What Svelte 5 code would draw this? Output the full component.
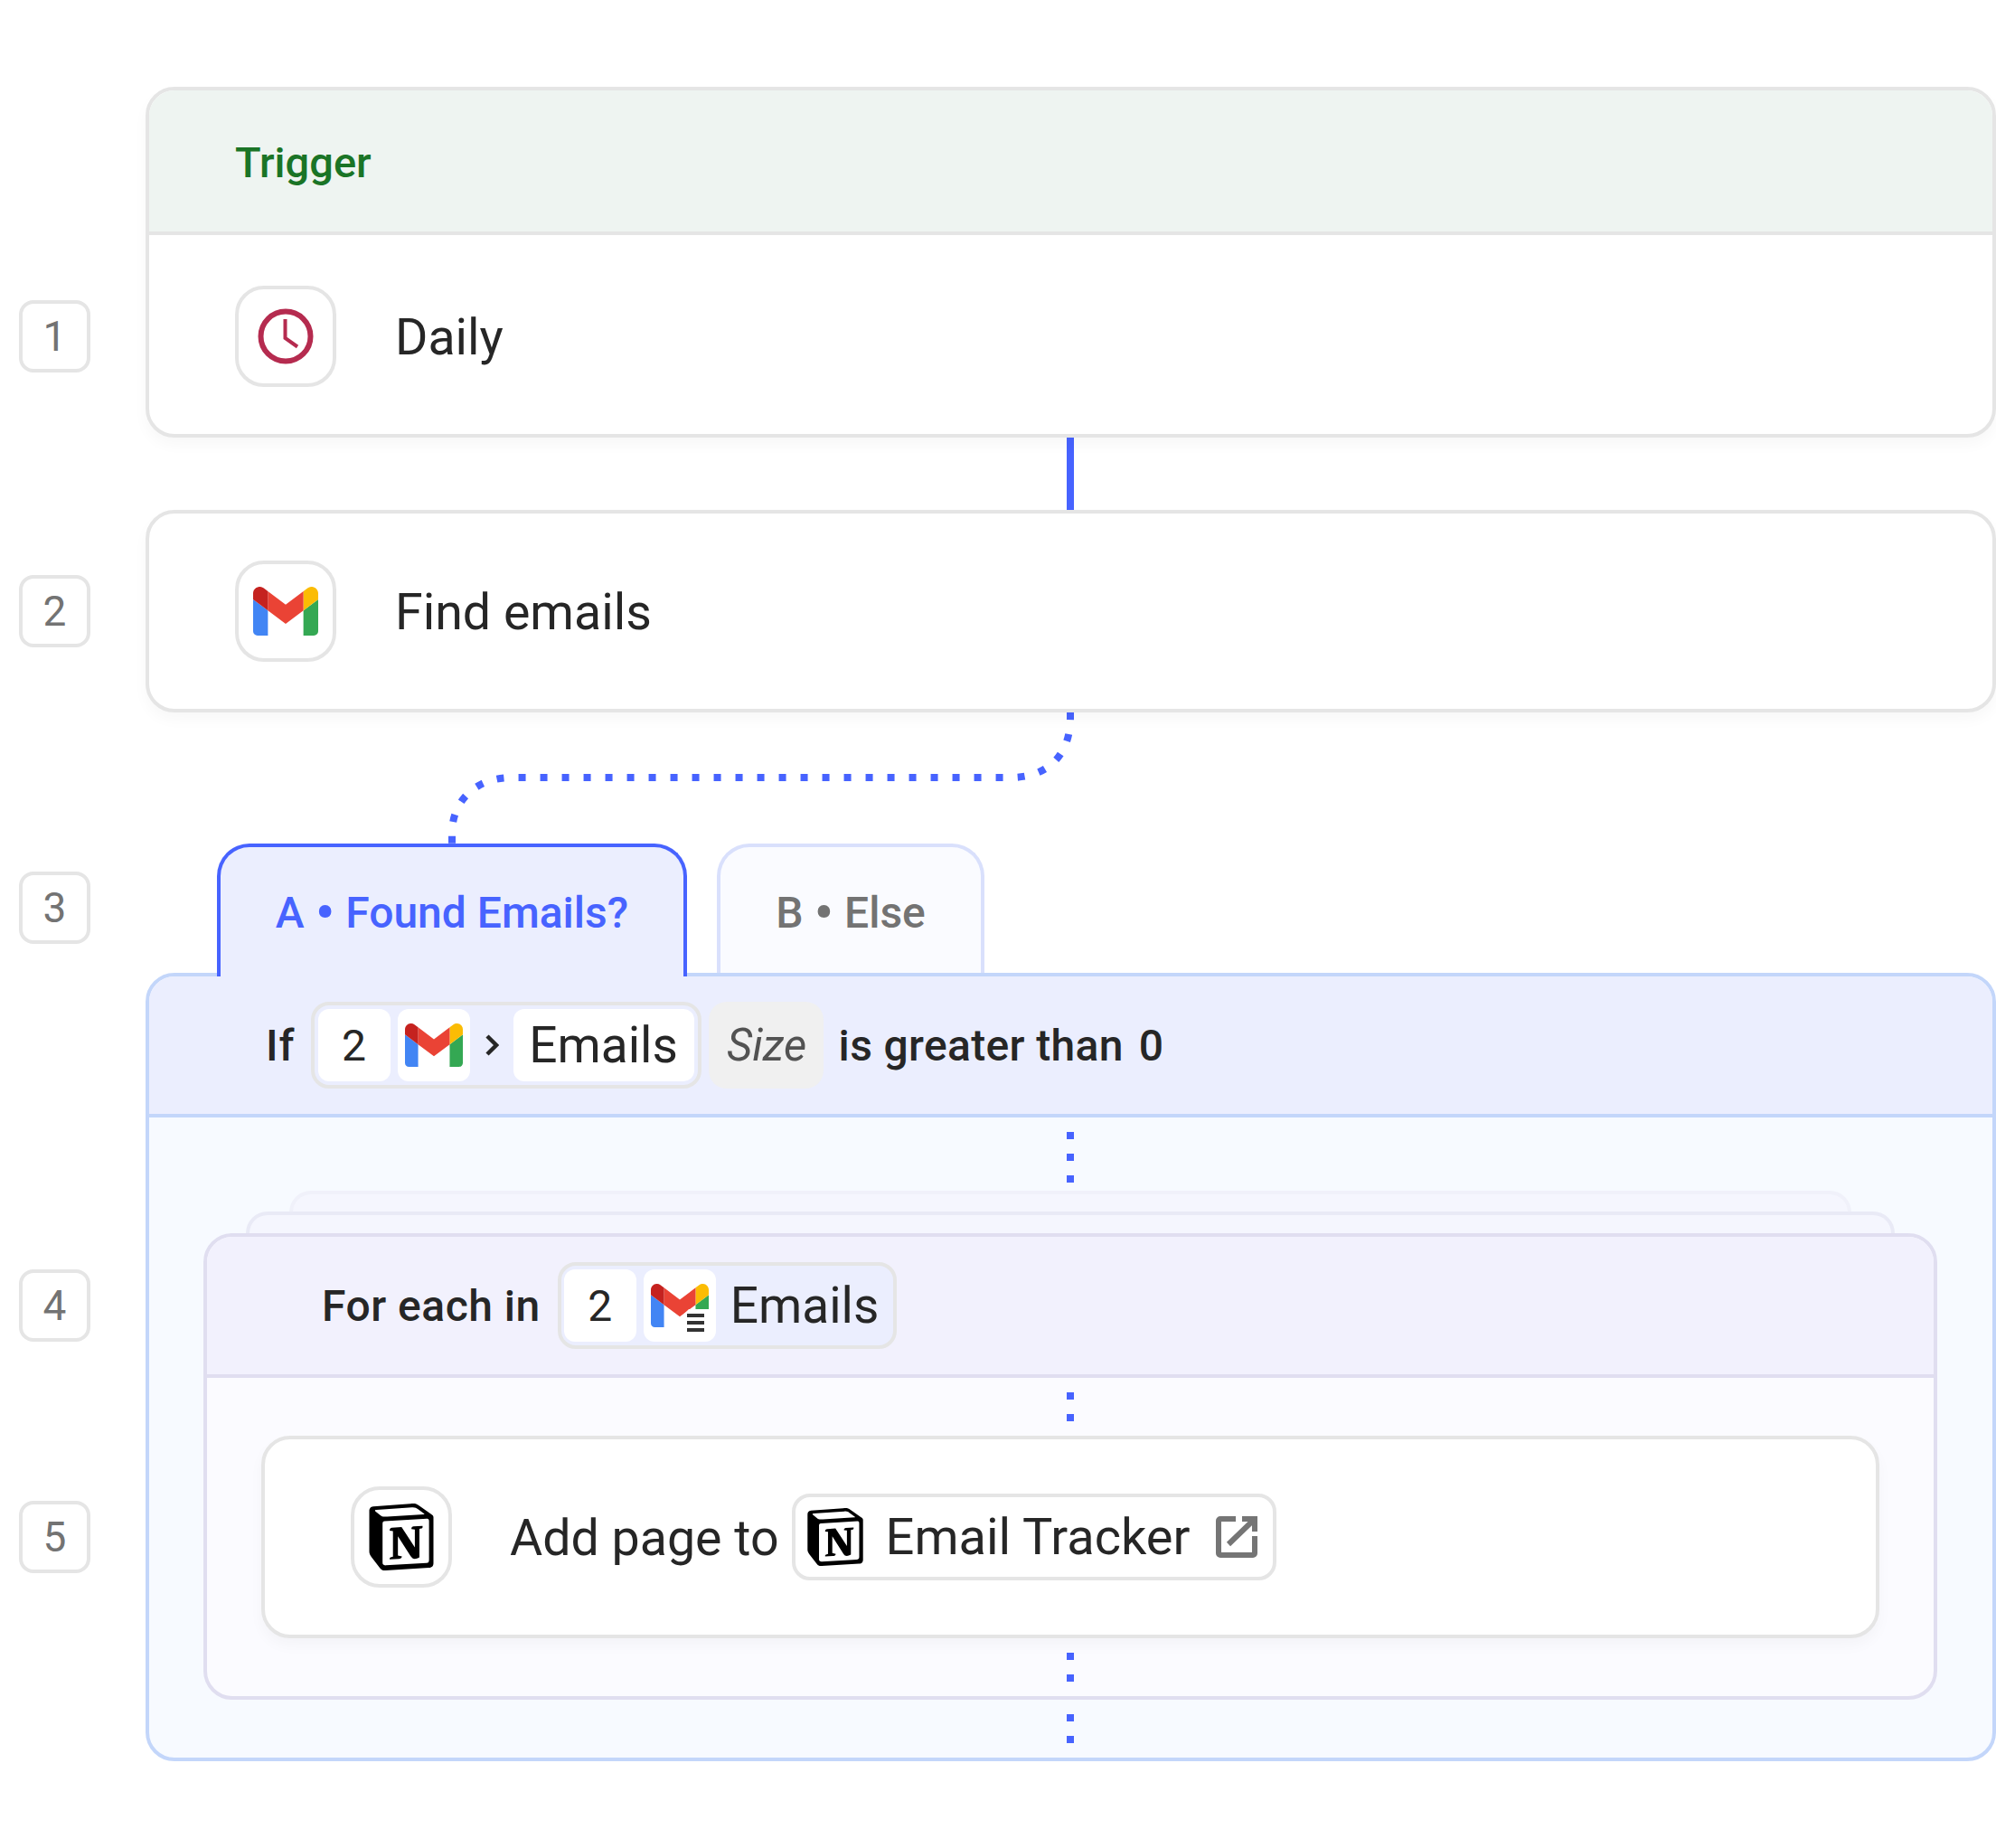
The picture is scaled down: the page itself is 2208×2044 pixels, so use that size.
<script>
  const gmailPaths = [
    { fill: "#4285f4", d: "M58 108h14V74L52 59v43c0 3.32 2.69 6 6 6" },
    { fill: "#34a853", d: "M120 108h14c3.32 0 6-2.69 6-6V59l-20 15" },
    { fill: "#fbbc04", d: "M120 48v26l20-15v-8c0-7.42-8.47-11.65-14.4-7.2" },
    { fill: "#ea4335", d: "M72 74V48l24 18 24-18v26L96 92" },
    { fill: "#c5221f", d: "M52 51v8l20 15V48l-5.6-4.2c-5.94-4.45-14.4-.22-14.4 7.2" },
  ];
  const notionPath =
    "M4.459 4.208c.746.606 1.026.56 2.428.466l13.215-.793c.28 0 .047-.28-.046-.326L17.86 1.968c-.42-.326-.981-.7-2.055-.607L3.01 2.295c-.466.046-.56.28-.374.466zm.793 3.08v13.904c0 .747.373 1.027 1.214.98l14.523-.84c.841-.046.935-.56.935-1.167V6.354c0-.606-.233-.933-.748-.887l-15.177.887c-.56.047-.747.327-.747.933zm14.337.745c.093.42 0 .84-.42.888l-.7.14v10.264c-.608.327-1.168.514-1.635.514-.748 0-.935-.234-1.495-.933l-4.577-7.186v6.952L12.21 19s0 .84-1.168.84l-3.222.186c-.093-.186 0-.653.327-.746l.84-.233V9.854L7.822 9.76c-.094-.42.14-1.026.793-1.073l3.456-.233 4.764 7.279v-6.44l-1.215-.14c-.093-.514.28-.887.747-.933zM1.936 1.035l13.31-.98c1.634-.14 2.055-.047 3.082.7l4.249 2.986c.7.513.934.653.934 1.213v16.378c0 1.026-.373 1.634-1.68 1.726l-15.458.934c-.98.047-1.448-.093-1.962-.747l-3.129-4.06c-.56-.747-.793-1.306-.793-1.96V2.667c0-.839.374-1.54 1.447-1.632z";
</script>

{#snippet gmail(size)}
  <svg class="gmail" width={size} height={size * 0.75} viewBox="52 42 88 66" aria-hidden="true">
    {#each gmailPaths as p}
      <path fill={p.fill} d={p.d} />
    {/each}
  </svg>
{/snippet}

{#snippet notion(size)}
  <svg width={size} height={size} viewBox="0 0 24 24" aria-hidden="true">
    <path fill="#000" fill-rule="evenodd" d={notionPath} />
  </svg>
{/snippet}

{#snippet step(n, kind)}
  <span class="step {kind}">{n}</span>
{/snippet}

<main class="flow">
  <section class="card">
    {@render step(1, "step-daily")}
    <header class="trigger-head">Trigger</header>
    <div class="row row-daily">
      <span class="app-icon">
        <svg width="68" height="68" viewBox="0 0 68 68" fill="none" stroke="#b52b4f" aria-hidden="true">
          <circle cx="34" cy="34" r="27.5" stroke-width="6" />
          <path d="M33.500 15V36L47 45.500" stroke-width="4" />
        </svg>
      </span>
      <span class="label">Daily</span>
    </div>
  </section>

  <div class="solid-link"></div>

  <section class="card">
    {@render step(2, "step-row")}
    <div class="row">
      <span class="app-icon">{@render gmail(72)}</span>
      <span class="label">Find emails</span>
    </div>
  </section>

  <svg class="branch-link" width="700" height="145" viewBox="490 788 700 145" fill="none" aria-hidden="true">
    <path d="M1184 788V794C1184 836 1158 860 1118 860H566C526 860 500 886 500 922V933" stroke="#4763ff" stroke-width="8" stroke-dasharray="8 16" />
  </svg>

  <div class="tabs">
    {@render step(3, "step-tabs")}
    <div class="tab active">A <span class="bullet">•</span> Found Emails?</div>
    <div class="tab">B <span class="bullet">•</span> Else</div>
  </div>

  <section class="panel">
    <header class="panel-head">
      <span class="strong if">If</span>
      <span class="chip">
        <span class="seg num">2</span>
        <span class="seg logo">{@render gmail(64)}</span>
        <svg class="chevron" width="16" height="24" viewBox="0 0 16 24" fill="none" stroke="#262626" stroke-width="4.500" aria-hidden="true">
          <path d="M3 2l10 10-10 10" />
        </svg>
        <span class="seg word">Emails</span>
      </span>
      <span class="size">Size</span>
      <span class="strong cond">is greater than<span class="zero">0</span></span>
    </header>

    <div class="panel-body">
      <div class="dots three"></div>
      <div class="back back-far"></div>
      <div class="back back-near"></div>

      <section class="loop">
        {@render step(4, "step-loop")}
        <header class="loop-head">
          <span class="strong each">For each in</span>
          <span class="chip chip-loop">
            <span class="seg num">2</span>
            <span class="seg logo list-logo">
              {@render gmail(64)}
              <svg class="list-mark" width="34" height="30" viewBox="0 0 34 30" aria-hidden="true">
                <path fill="#fff" d="M8 0H34V30H0V8z" />
                <path fill="#333" d="M6 5h19v4H6zM6 13h19v4H6zM6 21h19v4H6z" />
              </svg>
            </span>
            <span class="word-plain">Emails</span>
          </span>
        </header>

        <div class="loop-body">
          <div class="dots two"></div>
          <section class="card action">
            {@render step(5, "step-action")}
            <div class="row action-row">
              <span class="app-icon">{@render notion(74)}</span>
              <span class="label">Add page to</span>
              <span class="chip chip-page">
                {@render notion(64)}
                <span class="page-name">Email Tracker</span>
                <svg width="46" height="46" viewBox="0 0 46 46" fill="none" stroke="#757575" stroke-width="6" aria-hidden="true">
                  <path d="M22 3H5a2 2 0 0 0-2 2v36a2 2 0 0 0 2 2h36a2 2 0 0 0 2-2V22" />
                  <path d="M29 3H43V17M43 3L14 31" />
                </svg>
              </span>
            </div>
          </section>
          <div class="dots two after"></div>
        </div>
      </section>

      <div class="dots two tail"></div>
    </div>
  </section>
</main>

<style>
  :global(body) {
    margin: 0;
    background: #fff;
  }

  .flow {
    display: flex;
    flex-direction: column;
    box-sizing: border-box;
    width: 2208px;
    height: 2044px;
    padding: 96px 0 0 161px;
    overflow: hidden;
    font-family: Roboto, "Noto Sans", sans-serif;
    color: #262626;
  }

  .flow :global(svg) {
    display: block;
    flex: none;
  }

  .card {
    position: relative;
    border: 4px solid #e5e5e5;
    border-radius: 32px;
    background: #fff;
    box-shadow: 0 8px 16px rgba(0, 0, 0, 0.03);
  }

  .trigger-head {
    display: flex;
    align-items: center;
    box-sizing: border-box;
    height: 160px;
    padding: 2px 0 0 95px;
    border-bottom: 4px solid #e5e5e5;
    border-radius: 28px 28px 0 0;
    background: #eef4f1;
    color: #1a7426;
    font-size: 47px;
    font-weight: 500;
  }

  .row {
    display: flex;
    align-items: center;
    box-sizing: border-box;
    height: 216px;
    padding-left: 95px;
  }

  .row-daily {
    height: 220px;
    padding-top: 4px;
  }

  .app-icon {
    display: flex;
    align-items: center;
    justify-content: center;
    box-sizing: border-box;
    width: 112px;
    height: 112px;
    margin-right: 65px;
    border: 4px solid #e5e5e5;
    border-radius: 32px;
    background: #fff;
  }

  .label {
    padding-top: 2px;
    font-size: 55.500px;
  }

  .step {
    position: absolute;
    display: flex;
    align-items: center;
    justify-content: center;
    box-sizing: border-box;
    width: 79px;
    height: 80px;
    border: 4px solid #e5e5e5;
    border-radius: 16px;
    background: #fff;
    color: #737373;
    font-size: 46px;
  }

  .step-daily {
    left: -144px;
    top: 232px;
  }

  .step-row {
    left: -144px;
    top: 68px;
  }

  .step-tabs {
    left: -219px;
    top: 31px;
  }

  .step-loop {
    left: -208px;
    top: 36px;
  }

  .step-action {
    left: -272px;
    top: 68px;
  }

  .solid-link {
    width: 8px;
    height: 80px;
    margin-left: 1019px;
    background: #4763ff;
  }

  .branch-link {
    margin-left: 329px;
  }

  .tabs {
    position: relative;
    z-index: 1;
    display: flex;
    gap: 33px;
    align-items: flex-start;
    height: 143px;
    margin-left: 79px;
  }

  .tab {
    display: flex;
    align-items: center;
    justify-content: center;
    box-sizing: border-box;
    width: 296px;
    height: 143px;
    padding-top: 6px;
    border: 4px solid #d9e0fc;
    border-bottom: 0;
    border-radius: 36px 36px 0 0;
    background: #fafbff;
    color: #737373;
    font-size: 48px;
    font-weight: 500;
    white-space: pre;
  }

  .tab.active {
    width: 520px;
    height: 147px;
    padding-top: 2px;
    border-color: #4763ff;
    background: #ebeefe;
    color: #4763ff;
  }

  .bullet {
    font-size: 62px;
    line-height: 48px;
  }

  .panel {
    border: 4px solid #c3d6fa;
    border-radius: 32px;
    background: #f7faff;
  }

  .panel-head {
    display: flex;
    align-items: center;
    box-sizing: border-box;
    height: 156px;
    padding-left: 129px;
    border-bottom: 4px solid #c3d6fa;
    border-radius: 28px 28px 0 0;
    background: #ebeefe;
  }

  .strong {
    font-size: 48px;
    font-weight: 500;
  }

  .if {
    margin-right: 17px;
    letter-spacing: 1px;
  }

  .cond {
    letter-spacing: 0.350px;
  }

  .chip {
    display: flex;
    align-items: center;
    box-sizing: border-box;
    height: 96px;
    padding: 0 4px;
    gap: 8px;
    border: 4px solid #e5e5e5;
    border-radius: 20px;
    background: #ebeefe;
  }

  .seg {
    display: flex;
    align-items: center;
    justify-content: center;
    height: 80px;
    border-radius: 12px;
    background: #fff;
  }

  .num,
  .logo {
    width: 80px;
  }

  .num {
    font-size: 48px;
  }

  .chevron {
    margin: 0 8px;
  }

  .word {
    box-sizing: border-box;
    width: 200px;
    font-size: 55px;
  }

  .size {
    display: flex;
    align-items: center;
    justify-content: center;
    box-sizing: border-box;
    width: 127px;
    height: 96px;
    margin: 0 17px 0 8px;
    padding-left: 2px;
    border-radius: 20px;
    background: #f0f0f0;
    color: #525252;
    font-size: 49px;
    font-style: italic;
  }

  .zero {
    margin-left: 17px;
  }

  .panel-body {
    display: flex;
    flex-direction: column;
    box-sizing: border-box;
    height: 708px;
    padding: 0 61px 0 60px;
  }

  .dots {
    flex: none;
    align-self: center;
    width: 8px;
    background: repeating-linear-gradient(#4763ff 0 8px, transparent 8px 24px);
  }

  .dots.three {
    height: 56px;
    margin: 16px 0 9px;
  }

  .dots.two {
    height: 32px;
    margin: 16px 0 16px;
  }

  .dots.two.after,
  .dots.two.tail {
    margin: 16px 0 0;
  }

  .back {
    flex: none;
    box-sizing: border-box;
    height: 40px;
    background: #f5f6fe;
    border: 4px solid #f0f1fa;
    border-bottom: 0;
    border-radius: 24px 24px 0 0;
  }

  .back-far {
    margin: 0 95px -17px;
  }

  .back-near {
    margin: 0 47px -16px;
    border-color: #e9eaf6;
  }

  .loop {
    position: relative;
    flex: none;
    border: 4px solid #e0def0;
    border-radius: 32px;
    background: #fbfbff;
  }

  .loop-head {
    display: flex;
    align-items: center;
    box-sizing: border-box;
    height: 156px;
    padding-left: 127px;
    border-bottom: 4px solid #e0def0;
    border-radius: 28px 28px 0 0;
    background: #f2f1fd;
  }

  .each {
    margin-right: 19px;
    letter-spacing: 0.500px;
  }

  .chip-loop {
    width: 375px;
    padding: 0 3px;
  }

  .word-plain {
    margin-left: 8px;
    font-size: 55px;
  }

  .list-logo {
    position: relative;
  }

  .list-mark {
    position: absolute;
    right: 4px;
    bottom: 6px;
  }

  .loop-body {
    display: flex;
    flex-direction: column;
    box-sizing: border-box;
    height: 352px;
    padding: 0 60px;
  }

  .action {
    flex: none;
  }

  .action-row .app-icon {
    margin-right: 64px;
  }

  .chip-page {
    width: 536px;
    margin-left: 14px;
    padding: 0 17px 0 12px;
    gap: 0;
    background: #fff;
  }

  .page-name {
    flex: 1;
    margin-left: 24px;
    font-size: 56px;
  }
</style>
